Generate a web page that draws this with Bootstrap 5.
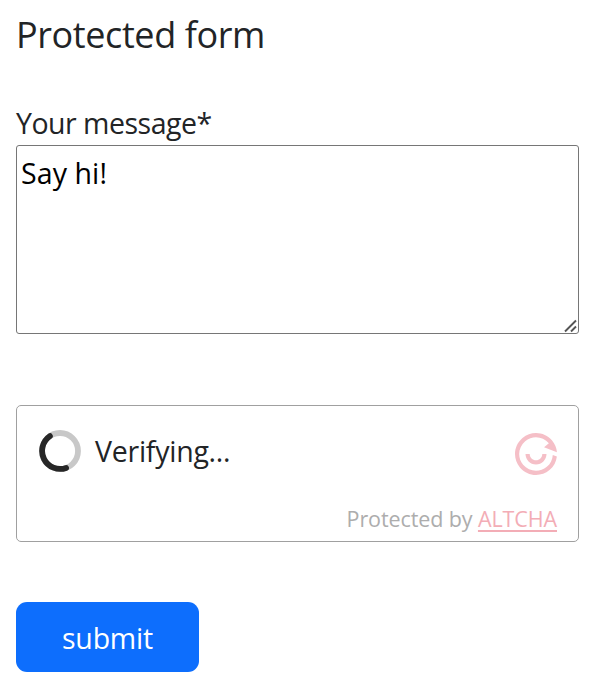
<!DOCTYPE html>
<html lang="en">
<head>
<meta charset="utf-8">
<meta name="viewport" content="width=device-width, initial-scale=1">
<title>Protected form</title>
<link href="https://cdn.jsdelivr.net/npm/bootstrap@5.3.0/dist/css/bootstrap.min.css" rel="stylesheet">
<style>
body{font-family:"Open Sans","Noto Sans",sans-serif;color:#222426;font-size:28.5px;overflow:hidden}
.form-page{padding:11px 16px 0}
.form-title{font-size:36px;line-height:48px;height:48px;margin:0 0 44px;font-weight:400;letter-spacing:-.4px}
.msg-label{line-height:41px;height:42px;letter-spacing:-.5px}
.msg-area{height:189px;border:1px solid #767676;border-radius:3px;padding:6px 4px;line-height:42px;color:#000;resize:none;outline:0;font-size:28.5px;letter-spacing:.1px;overflow:hidden}
.grip{right:1px;bottom:1px;width:14px;height:14px}
.altcha-box{margin-top:71px;height:137px;border:1px solid #a0a0a0;border-radius:5px;padding:24px 21px 0 22px}
.spin{width:42px;height:42px;margin-right:14px}
.state-text{line-height:43px;letter-spacing:-.25px}
.logo{width:42px;height:42px;margin-top:3px;color:#f5bfc7}
.foot{font-size:21.5px;line-height:30px;margin-top:29px;color:#adadad;letter-spacing:-.1px}
.foot a{color:#f3adb6;text-decoration-thickness:2px;text-underline-offset:3px}
.send{margin-top:60px;width:183px;height:70px;border-radius:11px;font-size:28.5px;line-height:1;padding:2px 0 0;letter-spacing:-.2px;background:#0d6efd}
</style>
</head>
<body class="bg-white">
<form class="form-page">
  <h1 class="form-title">Protected form</h1>
  <label class="msg-label d-block" for="msg">Your message*</label>
  <div class="position-relative">
    <textarea id="msg" class="msg-area d-block w-100">Say hi!</textarea>
    <svg class="grip position-absolute" viewBox="0 0 14 14" fill="none" stroke="#555" stroke-width="1.9"><path d="M1 12.5 12 1.5M7 12.5 12 7.5"/></svg>
  </div>
  <div class="altcha-box">
    <div class="d-flex align-items-start">
      <svg class="spin" viewBox="-21 -21 42 42" fill="none" stroke-width="5.8"><circle r="18" stroke="#c8c8c8"/><path d="M-10.1 -14.9A18 18 0 0 0 6.1 16.9" stroke="#272727" stroke-linecap="round"/></svg>
      <span class="state-text flex-grow-1">Verifying...</span>
      <svg class="logo" viewBox="0 0 20 20" fill="currentColor"><path d="M2.34 16.428C5.89 20.659 12.197 21.21 16.428 17.66C18.47 15.947 19.655 13.591 19.935 11.137L17.989 10.428C17.874 12.562 16.909 14.646 15.142 16.128C11.758 18.968 6.712 18.527 3.872 15.142C1.032 11.758 1.473 6.712 4.858 3.872C8.242 1.032 13.288 1.473 16.128 4.858L13.83 6.786L19.963 9.134C19.793 7.156 19.034 5.208 17.66 3.572C14.11 -.659 7.803 -1.21 3.572 2.34C-.659 5.89 -1.21 12.197 2.34 16.428Z"/><path d="M7 10H5C5 12.761 7.239 15 10 15C12.761 15 15 12.761 15 10H13C13 11.657 11.657 13 10 13C8.343 13 7 11.657 7 10Z"/></svg>
    </div>
    <div class="foot text-end">Protected by <a href="#">ALTCHA</a></div>
  </div>
  <button type="button" class="send btn btn-primary border-0 d-block">submit</button>
</form>
<script src="https://cdn.jsdelivr.net/npm/bootstrap@5.3.0/dist/js/bootstrap.bundle.min.js"></script>
</body>
</html>
